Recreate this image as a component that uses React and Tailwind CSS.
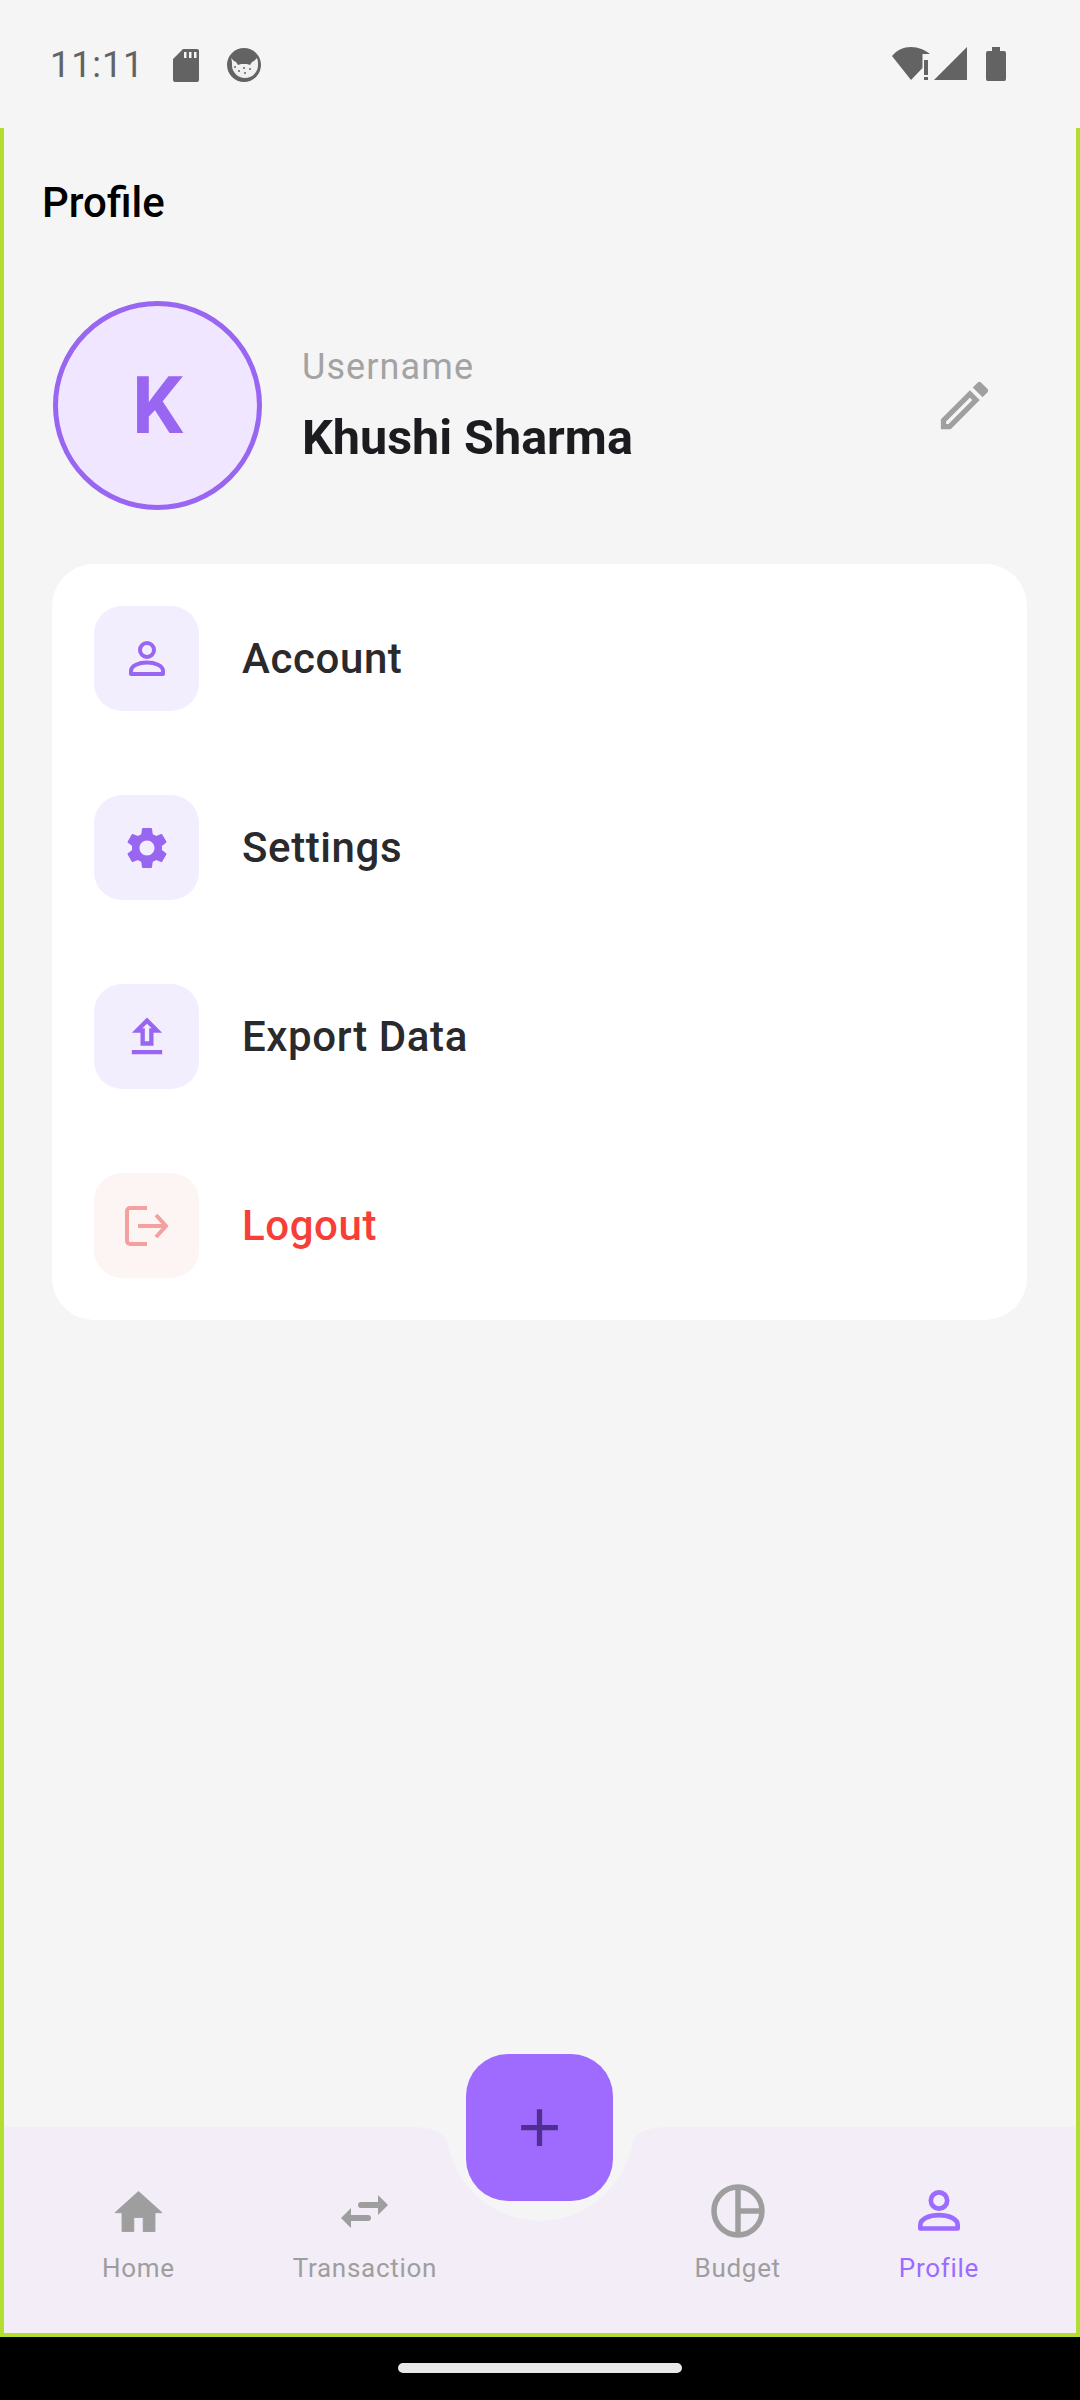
import React from 'react';

const PersonIcon = ({ className }) => (
  <svg viewBox="0 0 36 36" className={className} fill="none" stroke="currentColor" strokeWidth="4">
    <circle cx="18" cy="9" r="7" />
    <path d="M2 33v-3c0-5.500 8-8.500 16-8.500s16 3 16 8.500v3z" strokeLinejoin="round" />
  </svg>
);

const GearIcon = ({ className }) => (
  <svg viewBox="0 0 24 24" className={className} fill="currentColor">
    <path d="M19.14 12.94c.04-.3.06-.61.06-.94 0-.32-.02-.64-.07-.94l2.03-1.58c.18-.14.23-.41.12-.61l-1.92-3.32c-.12-.22-.37-.29-.59-.22l-2.39.96c-.5-.38-1.03-.7-1.62-.94l-.36-2.54c-.04-.24-.24-.41-.48-.41h-3.84c-.24 0-.43.17-.47.41l-.36 2.54c-.59.24-1.13.57-1.62.94l-2.39-.96c-.22-.08-.47 0-.59.22L2.74 8.87c-.12.21-.08.47.12.61l2.03 1.58c-.05.3-.09.63-.09.94s.02.64.07.94l-2.03 1.58c-.18.14-.23.41-.12.61l1.92 3.32c.12.22.37.29.59.22l2.39-.96c.5.38 1.03.7 1.62.94l.36 2.54c.05.24.24.41.48.41h3.84c.24 0 .44-.17.47-.41l.36-2.54c.59-.24 1.13-.56 1.62-.94l2.39.96c.22.08.47 0 .59-.22l1.92-3.32c.12-.22.07-.47-.12-.61l-2.01-1.58zM12 15.6c-1.98 0-3.6-1.62-3.6-3.6s1.62-3.6 3.6-3.6 3.6 1.62 3.6 3.6-1.62 3.6-3.6 3.6z" />
  </svg>
);

const UploadIcon = ({ className }) => (
  <svg viewBox="0 0 24 24" className={className} fill="currentColor">
    <path d="M9 16h6v-6h4l-7-7-7 7h4v6zm3-10.17L14.17 8H13v6h-2V8H9.83L12 5.83zM5 18h14v2H5z" />
  </svg>
);

const LogoutIcon = ({ className }) => (
  <svg viewBox="0 0 43 40" className={className} fill="none" stroke="currentColor" strokeWidth="4">
    <path d="M22 2H5a3 3 0 0 0-3 3v30a3 3 0 0 0 3 3h17" />
    <path d="M13 20h28M31 9l10 11-10 11" />
  </svg>
);

const menu = [
  { label: 'Account', icon: <PersonIcon className="w-[36px] h-[36px]" /> },
  { label: 'Settings', icon: <GearIcon className="w-[50px] h-[50px]" /> },
  { label: 'Export Data', icon: <UploadIcon className="w-[52px] h-[52px]" /> },
];

const NavItem = ({ label, icon, active }) => (
  <div className={`flex flex-col items-center ${active ? 'text-[#9c6bff]' : 'text-[#9e9e9e]'}`}>
    <div className="h-[58px] flex items-center justify-center">{icon}</div>
    <span className="mt-[13px] text-[26px] leading-[30px] tracking-[0.7px]">{label}</span>
  </div>
);

export default function App() {
  return (
    <div className="w-[1080px] h-[2400px] flex flex-col bg-black font-['Roboto',sans-serif]">
      {/* status bar */}
      <div className="h-[128px] shrink-0 bg-[#f5f5f5] flex items-start text-[#636363] pt-[47px] pl-[50px] pr-[74px]">
        <span className="text-[36px] leading-[36px] tracking-[0.9px]">11:11</span>
        <svg viewBox="0 0 26 33" className="w-[26px] h-[33px] ml-[29px] mt-[2px]" fill="currentColor">
          <path d="M10 0h14a2 2 0 0 1 2 2v29a2 2 0 0 1-2 2H2a2 2 0 0 1-2-2V10zM11 3v6h2.500V3zM16 3v6h2.500V3zM21 3v6h2.500V3z" fillRule="evenodd" />
        </svg>
        <svg viewBox="0 0 34 34" className="w-[34px] h-[34px] ml-[28px] mt-[1px]">
          <circle cx="17" cy="17" r="17" fill="currentColor" />
          <path d="M4 10l3 3 2 1 2 3 3-1h6l3 1 2-3 2-1 3-3c1 2 1 5 1 7a13 13 0 0 1-26 0c0-2 0-5-1-7z" fill="#f0f0f0" />
          <circle cx="12" cy="23" r="1" fill="currentColor" />
          <circle cx="18" cy="25" r="1" fill="currentColor" />
          <circle cx="23" cy="21" r="1" fill="currentColor" />
          <circle cx="8" cy="19" r="1" fill="currentColor" />
          <circle cx="17" cy="20" r="1" fill="currentColor" />
        </svg>
        <div className="ml-auto flex items-start">
          <svg viewBox="0 0 38 33" className="w-[38px] h-[33px]" fill="currentColor">
            <path d="M0 9C5 3 11.500 0 19 0s14 3 19 7H30.500V21L19 33z" />
            <path d="M32 13h4v15h-4zM32 30h4v3h-4z" />
          </svg>
          <svg viewBox="0 0 33 33" className="w-[33px] h-[33px] ml-[4px]" fill="currentColor">
            <path d="M33 0v33H0z" />
          </svg>
          <svg viewBox="0 0 20 34" className="w-[20px] h-[34px] ml-[19px]" fill="currentColor">
            <path d="M6 0h8v4h4a2 2 0 0 1 2 2v26a2 2 0 0 1-2 2H2a2 2 0 0 1-2-2V6a2 2 0 0 1 2-2h4z" />
          </svg>
        </div>
      </div>

      {/* screen */}
      <div className="h-[2209px] shrink-0 flex flex-col bg-[#f5f5f5] border-x-[4px] border-b-[4px] border-[#b2df2f]">
        <h1 className="mt-[50px] ml-[38px] text-[42px] leading-[50px] text-black font-medium">Profile</h1>

        {/* profile row */}
        <div className="mt-[73px] ml-[49px] mr-[49px] flex items-center">
          <div className="w-[209px] h-[209px] rounded-full border-[5px] border-[#9966f2] bg-[#f0e6ff] flex items-center justify-center text-[#9966f2] text-[80px] font-bold leading-none">
            K
          </div>
          <div className="ml-[40px] flex flex-col">
            <span className="text-[36px] leading-[42px] text-[#a3a3a3] tracking-[1.1px]">Username</span>
            <span className="mt-[22px] text-[48.500px] leading-[56px] font-bold text-[#1c1b1f]">Khushi Sharma</span>
          </div>
          <svg viewBox="0 0 24 24" className="w-[63px] h-[63px] ml-auto mr-[31px] text-[#a0a0a0]" fill="currentColor">
            <path d="M3 17.250V21h3.750L17.810 9.940l-3.750-3.750L3 17.250zM5.920 19H5v-.92l9.060-9.060.92.92L5.920 19zM20.710 5.630l-2.340-2.340c-.39-.39-1.020-.39-1.410 0l-1.830 1.830 3.750 3.750 1.830-1.830c.39-.39.39-1.020 0-1.410z" />
          </svg>
        </div>

        {/* menu card */}
        <div className="mt-[54px] ml-[48px] mr-[49px] bg-white rounded-[42px] p-[42px] flex flex-col gap-[84px]">
          {menu.map((item) => (
            <div key={item.label} className="flex items-center">
              <div className="w-[105px] h-[105px] rounded-[28px] bg-[#f3eefe] text-[#9966f2] flex items-center justify-center">
                {item.icon}
              </div>
              <span className="ml-[43px] text-[42px] font-medium text-[#2a292c] tracking-[0.6px]">{item.label}</span>
            </div>
          ))}
          <div className="flex items-center">
            <div className="w-[105px] h-[105px] rounded-[28px] bg-[#fdf4f4] text-[#f4a0a0] flex items-center justify-center">
              <LogoutIcon className="w-[43px] h-[40px]" />
            </div>
            <span className="ml-[43px] text-[42px] font-medium text-[#f73e37] tracking-[0.6px]">Logout</span>
          </div>
        </div>

        {/* bottom nav */}
        <div className="relative mt-auto h-[206px] bg-[#f3edf7] pl-[98px] pr-[97px] pt-[55px] flex justify-between">
          <svg viewBox="0 0 280 95" className="absolute top-0 left-[396px] w-[280px] h-[95px] text-[#f5f5f5]" fill="currentColor">
            <path d="M10 0C30 0 43 4 47 14C55 60 95 94 140 94C185 94 225 60 233 14C237 4 250 0 270 0z" />
          </svg>
          <div className="relative flex gap-[118px]">
            <NavItem
              label="Home"
              icon={
                <svg viewBox="0 0 20 18" className="w-[47px] h-[43px]" fill="currentColor" stroke="currentColor" strokeWidth="0.4" strokeLinejoin="round">
                  <path d="M8 17.500v-6h4v6h5v-8h3L10 .5 0 9.500h3v8z" />
                </svg>
              }
            />
            <NavItem
              label="Transaction"
              icon={
                <svg viewBox="0 0 47 33" className="w-[47px] h-[33px]" fill="currentColor">
                  <path d="M37 0l10 10-10 10v-7H20a3 3 0 0 1 0-6h17zM10 13v7h17a3 3 0 0 1 0 6H10v7L0 23z" />
                </svg>
              }
            />
          </div>
          <div className="relative flex gap-[118px]">
            <NavItem
              label="Budget"
              icon={
                <svg viewBox="0 0 54 54" className="w-[54px] h-[54px]" fill="none" stroke="currentColor" strokeWidth="5.500">
                  <circle cx="27" cy="27" r="24" />
                  <path d="M27 3v48M27 27h24" />
                </svg>
              }
            />
            <NavItem label="Profile" active icon={<PersonIcon className="w-[42px] h-[42px]" />} />
          </div>
          <button className="absolute top-[-73px] left-[462px] w-[147px] h-[147px] rounded-[42px] bg-[#9f6bff] text-[#4f2f8f] flex items-center justify-center">
            <svg viewBox="0 0 24 24" className="w-[63px] h-[63px]" fill="currentColor">
              <path d="M19 13h-6v6h-2v-6H5v-2h6V5h2v6h6v2z" />
            </svg>
          </button>
        </div>
      </div>

      {/* android nav pill */}
      <div className="flex-1 flex justify-center pt-[26px]">
        <div className="w-[284px] h-[10px] rounded-full bg-[#e8e8e8]" />
      </div>
    </div>
  );
}
